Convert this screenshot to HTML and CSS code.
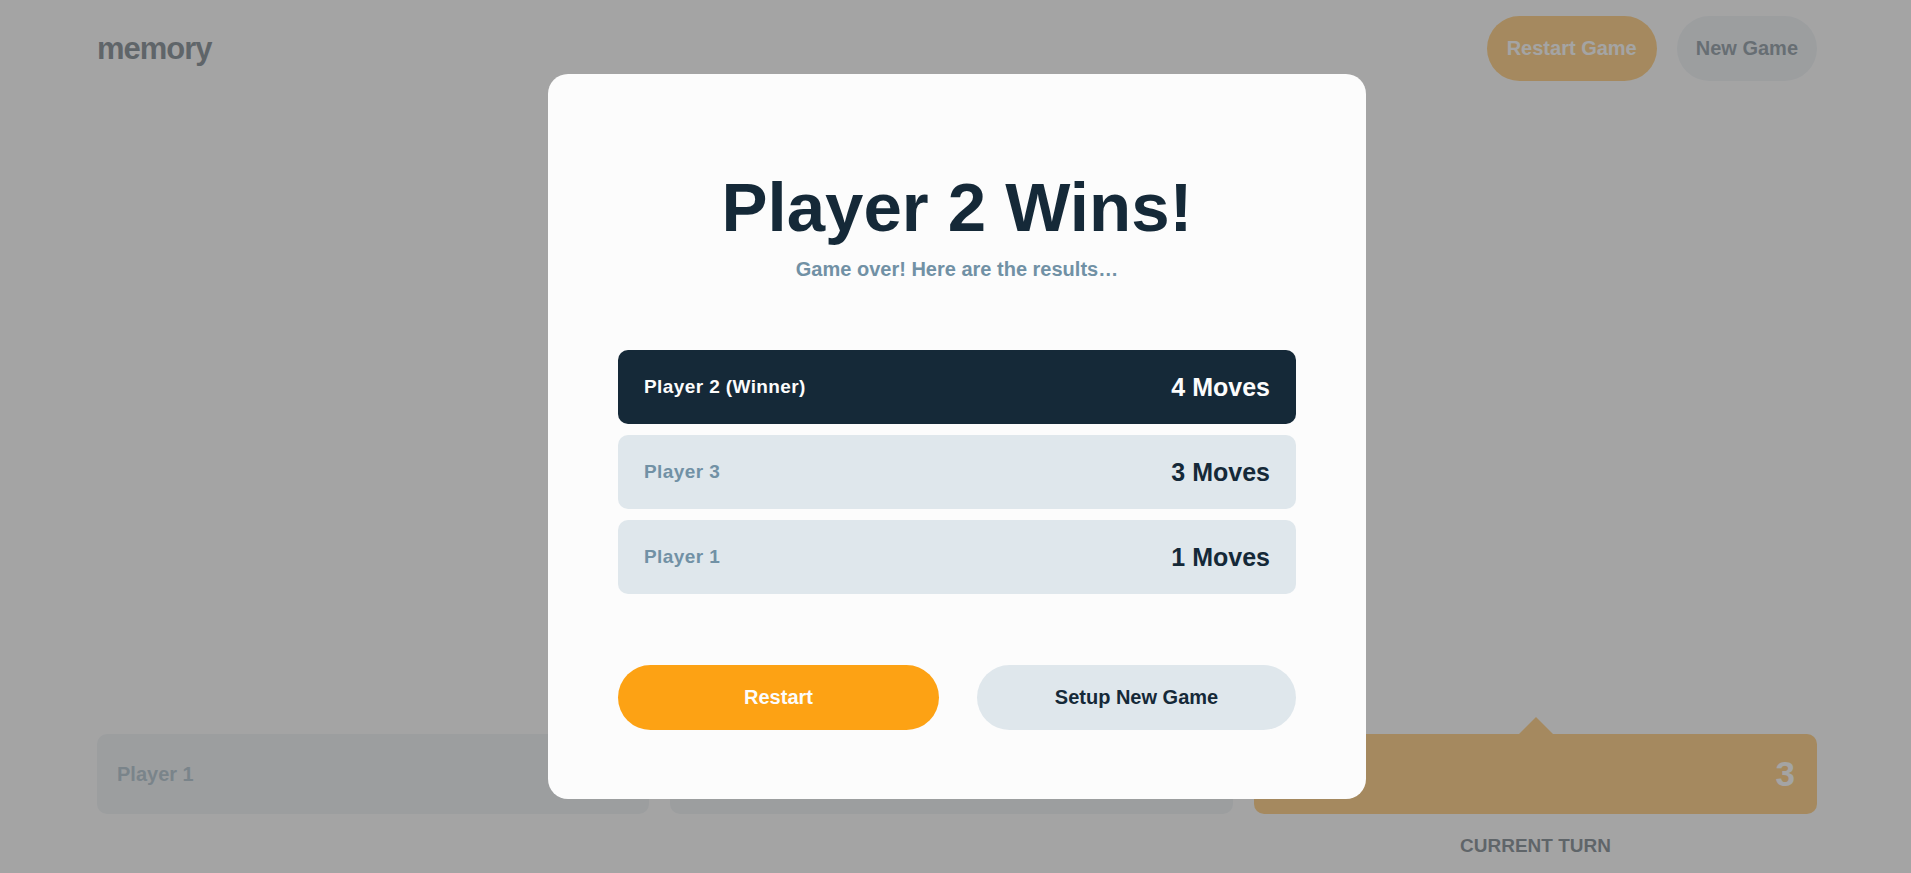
FILE: index.html
```html
<!DOCTYPE html>
<html lang="en">
<head>
<meta charset="utf-8">
<title>memory</title>
<link rel="stylesheet" href="styles.css">
</head>
<body>
<div class="page">
  <header class="header">
    <h1 class="logo">memory</h1>
    <nav class="header-actions">
      <button class="btn btn-primary">Restart Game</button>
      <button class="btn btn-secondary">New Game</button>
    </nav>
  </header>
  <main class="board"></main>
  <footer class="players">
    <div class="player">
      <div class="player-card"><span class="player-name">Player 1</span><span class="player-score">1</span></div>
    </div>
    <div class="player">
      <div class="player-card"><span class="player-name">Player 2</span><span class="player-score">4</span></div>
    </div>
    <div class="player is-current">
      <div class="player-card"><span class="player-name">Player 3</span><span class="player-score">3</span></div>
      <div class="turn-label">CURRENT TURN</div>
    </div>
  </footer>
</div>

<div class="overlay">
  <section class="modal">
    <h2 class="modal-title">Player 2 Wins!</h2>
    <p class="modal-sub">Game over! Here are the results…</p>
    <ul class="results">
      <li class="result winner"><span class="result-name">Player 2 (Winner)</span><span class="result-value">4 Moves</span></li>
      <li class="result"><span class="result-name">Player 3</span><span class="result-value">3 Moves</span></li>
      <li class="result"><span class="result-name">Player 1</span><span class="result-value">1 Moves</span></li>
    </ul>
    <div class="modal-actions">
      <button class="btn btn-primary btn-wide">Restart</button>
      <button class="btn btn-secondary btn-wide">Setup New Game</button>
    </div>
  </section>
</div>
</body>
</html>
```
FILE: styles.css
```css
* { box-sizing: border-box; }

html, body {
  margin: 0;
  padding: 0;
  height: 100%;
}

body {
  background: #fcfcfc;
  font-family: "Liberation Sans", Arial, sans-serif;
  font-weight: 700;
  color: #152938;
  overflow: hidden;
}

.page {
  height: 100vh;
  padding: 0 94px 0 97px;
  display: flex;
  flex-direction: column;
}

.header {
  display: flex;
  align-items: center;
  justify-content: space-between;
  padding-top: 16px;
}

.logo {
  margin: 0;
  font-size: 31px;
  letter-spacing: -1px;
  line-height: 1;
  color: #152938;
}

.header-actions {
  display: flex;
  gap: 20px;
}

.btn {
  border: 0;
  height: 65px;
  border-radius: 33px;
  font-family: inherit;
  font-weight: 700;
  font-size: 20px;
  padding: 0 19px;
  cursor: pointer;
}

.btn-primary {
  background: #fda214;
  color: #fcfcfc;
  padding: 0 20px;
}

.btn-secondary {
  background: #dfe7ec;
  color: #304859;
}

.board {
  flex: 1;
}

.players {
  display: grid;
  grid-template-columns: 552px 1fr 1fr;
  gap: 21px;
  padding-bottom: 18px;
}

.player {
  display: flex;
  flex-direction: column;
  align-items: center;
}

.player-card {
  position: relative;
  width: 100%;
  height: 80px;
  border-radius: 10px;
  background: #dfe7ec;
  display: flex;
  align-items: center;
  justify-content: space-between;
  padding: 0 22px 0 20px;
}

.player-name {
  font-size: 20px;
  color: #7191a5;
}

.player-score {
  font-size: 35px;
  color: #304859;
}

.is-current .player-card {
  background: #fda214;
}

.is-current .player-card::before {
  content: "";
  position: absolute;
  left: 50%;
  top: -17px;
  margin-left: -18px;
  border-left: 18px solid transparent;
  border-right: 18px solid transparent;
  border-bottom: 18px solid #fda214;
}

.is-current .player-name,
.is-current .player-score {
  color: #fcfcfc;
}

.turn-label {
  margin-top: 22px;
  font-size: 19px;
  line-height: 1;
  color: #152938;
}

.overlay {
  position: fixed;
  inset: 0;
  background: rgba(127, 127, 127, 0.7);
  display: flex;
  align-items: center;
  justify-content: center;
  padding-left: 3px;
}

.modal {
  width: 818px;
  background: #fcfcfc;
  border-radius: 20px;
  padding: 99px 70px 69px;
  display: flex;
  flex-direction: column;
  align-items: center;
}

.modal-title {
  margin: 0;
  font-size: 69px;
  line-height: 1;
  color: #152938;
}

.modal-sub {
  margin: 17px 0 0;
  font-size: 20px;
  line-height: 1;
  color: #7191a5;
}

.results {
  list-style: none;
  margin: 71px 0 0;
  padding: 0;
  width: 100%;
  display: flex;
  flex-direction: column;
  gap: 11px;
}

.result {
  height: 74px;
  border-radius: 10px;
  background: #dfe7ec;
  display: flex;
  align-items: center;
  justify-content: space-between;
  padding: 0 26px;
}

.result-name {
  font-size: 19px;
  letter-spacing: 0.4px;
  color: #7191a5;
}

.result-value {
  font-size: 25px;
  color: #152938;
}

.result.winner {
  background: #152938;
}

.result.winner .result-name,
.result.winner .result-value {
  color: #fcfcfc;
}

.modal-actions {
  margin-top: 71px;
  width: 100%;
  display: flex;
  gap: 38px;
}

.btn-wide {
  flex: 1;
  font-size: 20px;
}

.modal-actions .btn-secondary {
  color: #152938;
}
```
